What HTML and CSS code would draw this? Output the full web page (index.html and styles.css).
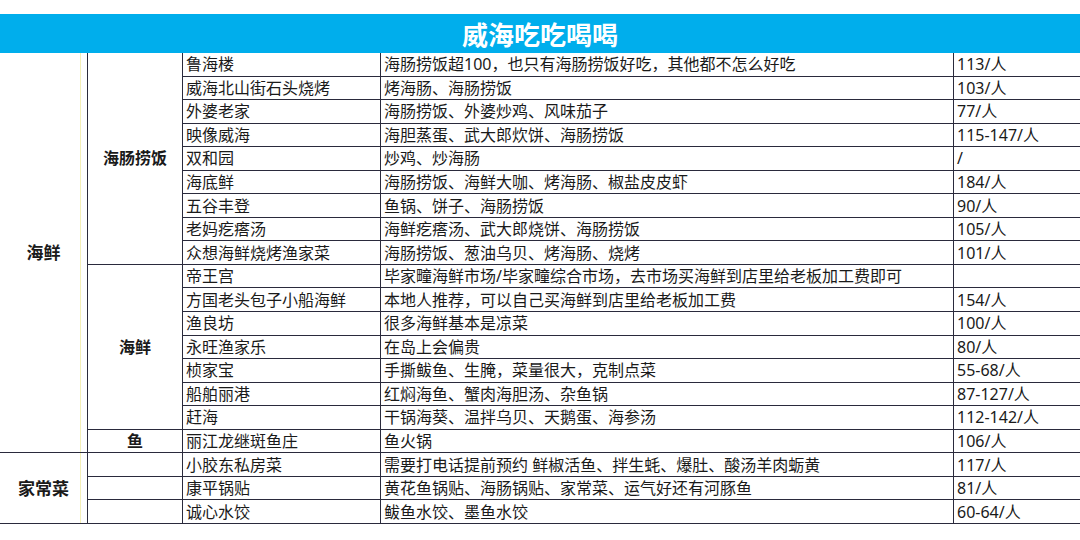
FILE: index.html
```html
<!DOCTYPE html>
<html lang="zh-CN">
<head>
<meta charset="utf-8">
<title>威海吃吃喝喝</title>
<link rel="stylesheet" href="styles.css">
</head>
<body>
<div class="sheet">
  <div class="title">威海吃吃喝喝</div>
  <div class="grid">
    <div class="cat c1 span17">海鲜</div>
    <div class="cat c2 span9">海肠捞饭</div>
    <div class="cell">鲁海楼</div><div class="cell">海肠捞饭超100，也只有海肠捞饭好吃，其他都不怎么好吃</div><div class="cell">113/人</div>
    <div class="cell">威海北山街石头烧烤</div><div class="cell">烤海肠、海肠捞饭</div><div class="cell">103/人</div>
    <div class="cell">外婆老家</div><div class="cell">海肠捞饭、外婆炒鸡、风味茄子</div><div class="cell">77/人</div>
    <div class="cell">映像威海</div><div class="cell">海胆蒸蛋、武大郎炊饼、海肠捞饭</div><div class="cell">115-147/人</div>
    <div class="cell">双和园</div><div class="cell">炒鸡、炒海肠</div><div class="cell">/</div>
    <div class="cell">海底鲜</div><div class="cell">海肠捞饭、海鲜大咖、烤海肠、椒盐皮皮虾</div><div class="cell">184/人</div>
    <div class="cell">五谷丰登</div><div class="cell">鱼锅、饼子、海肠捞饭</div><div class="cell">90/人</div>
    <div class="cell">老妈疙瘩汤</div><div class="cell">海鲜疙瘩汤、武大郎烧饼、海肠捞饭</div><div class="cell">105/人</div>
    <div class="cell">众想海鲜烧烤渔家菜</div><div class="cell">海肠捞饭、葱油乌贝、烤海肠、烧烤</div><div class="cell">101/人</div>
    <div class="cat c2 span7">海鲜</div>
    <div class="cell">帝王宫</div><div class="cell">毕家疃海鲜市场/毕家疃综合市场，去市场买海鲜到店里给老板加工费即可</div><div class="cell"></div>
    <div class="cell">方国老头包子小船海鲜</div><div class="cell">本地人推荐，可以自己买海鲜到店里给老板加工费</div><div class="cell">154/人</div>
    <div class="cell">渔良坊</div><div class="cell">很多海鲜基本是凉菜</div><div class="cell">100/人</div>
    <div class="cell">永旺渔家乐</div><div class="cell">在岛上会偏贵</div><div class="cell">80/人</div>
    <div class="cell">桢家宝</div><div class="cell">手撕鲅鱼、生腌，菜量很大，克制点菜</div><div class="cell">55-68/人</div>
    <div class="cell">船舶丽港</div><div class="cell">红焖海鱼、蟹肉海胆汤、杂鱼锅</div><div class="cell">87-127/人</div>
    <div class="cell">赶海</div><div class="cell">干锅海葵、温拌乌贝、天鹅蛋、海参汤</div><div class="cell">112-142/人</div>
    <div class="cat c2">鱼</div>
    <div class="cell">丽江龙继斑鱼庄</div><div class="cell">鱼火锅</div><div class="cell">106/人</div>
    <div class="cat c1 span3">家常菜</div>
    <div class="cat c2"></div>
    <div class="cell">小胶东私房菜</div><div class="cell">需要打电话提前预约 鲜椒活鱼、拌生蚝、爆肚、酸汤羊肉蛎黄</div><div class="cell">117/人</div>
    <div class="cat c2"></div>
    <div class="cell">康平锅贴</div><div class="cell">黄花鱼锅贴、海肠锅贴、家常菜、运气好还有河豚鱼</div><div class="cell">81/人</div>
    <div class="cat c2"></div>
    <div class="cell">诚心水饺</div><div class="cell">鲅鱼水饺、墨鱼水饺</div><div class="cell">60-64/人</div>
  </div>
</div>
</body>
</html>
```

FILE: styles.css
```css
html, body {
  margin: 0;
  padding: 0;
  background: #ffffff;
}
body {
  font-family: "Noto Sans", "Noto Sans CJK SC", sans-serif;
  color: #1a1a1a;
}
.sheet {
  padding-top: 14px;
  width: 1080px;
}
.title {
  height: 39px;
  background: #00aeec;
  color: #ffffff;
  font-family: "Noto Sans CJK SC", sans-serif;
  font-size: 26px;
  font-weight: 700;
  display: flex;
  align-items: center;
  justify-content: center;
}
.grid {
  display: grid;
  grid-template-columns: 87px 95px 198px 573px 127px;
  grid-template-rows: repeat(20, 23.55px);
  grid-auto-flow: row dense;
}
.cell, .cat {
  box-sizing: border-box;
  border-bottom: 1px solid #2a2a3c;
  border-left: 1px solid #2a2a3c;
  display: flex;
  align-items: center;
  font-size: 16px;
  line-height: 1;
  white-space: nowrap;
  overflow: hidden;
}
.cell {
  padding-left: 3px;
}
.cat {
  justify-content: center;
  font-weight: 700;
}
.c1 {
  grid-column: 1;
  border-left: none;
  font-size: 17px;
  box-shadow: inset -6px 0 0 #ffffff, inset -7px 0 0 #f4efb8;
}
.c2 {
  grid-column: 2;
}
.span17 { grid-row: span 17; }
.span9 { grid-row: span 9; }
.span7 { grid-row: span 7; }
.span3 { grid-row: span 3; }
```
